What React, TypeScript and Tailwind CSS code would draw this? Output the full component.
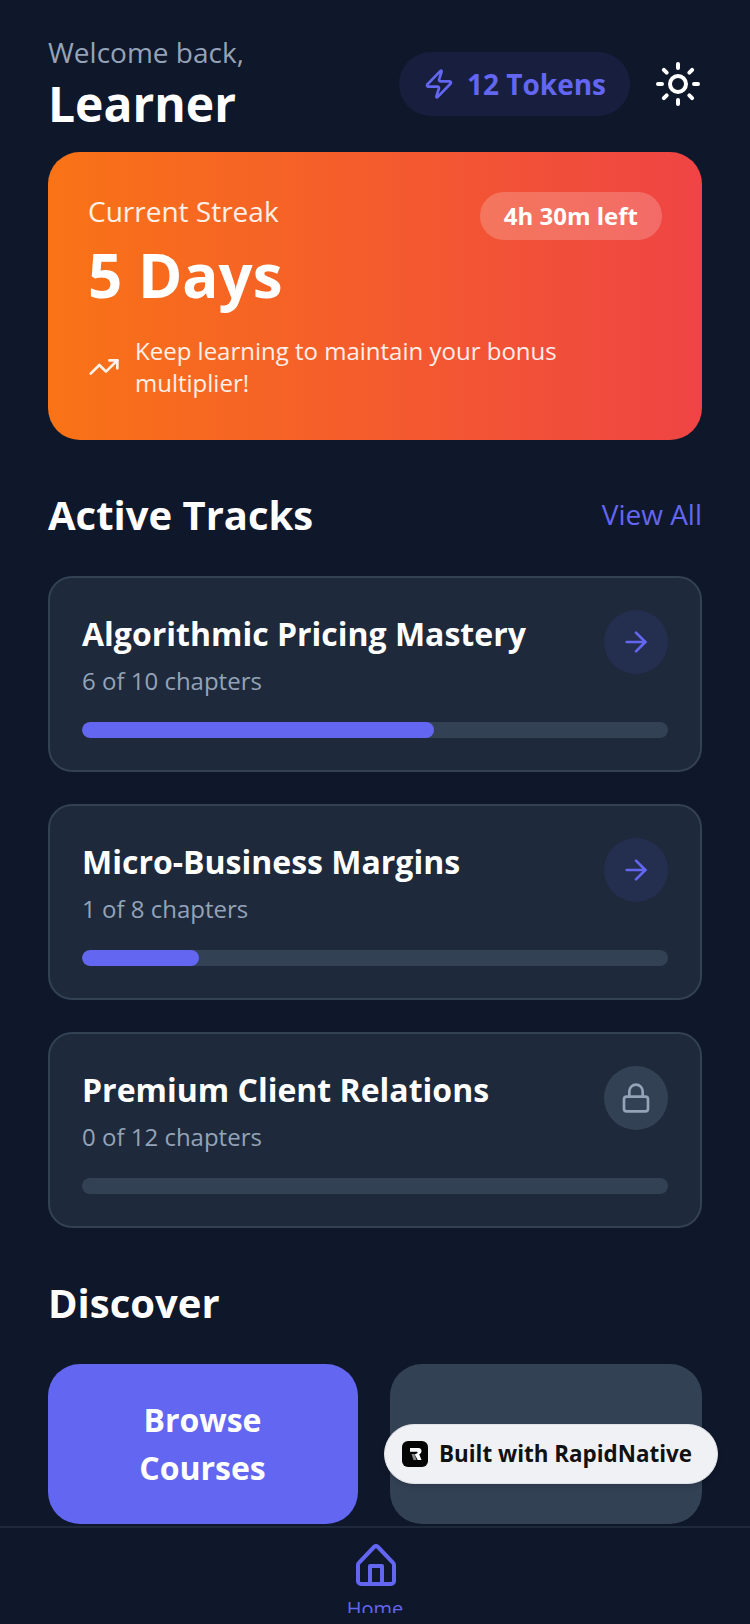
import { ArrowRight, Lock, Sun, TrendingUp, Zap } from "lucide-react"

const tracks = [
  { title: "Algorithmic Pricing Mastery", sub: "6 of 10 chapters", pct: 60, locked: false },
  { title: "Micro-Business Margins", sub: "1 of 8 chapters", pct: 20, locked: false },
  { title: "Premium Client Relations", sub: "0 of 12 chapters", pct: 0, locked: true },
]

function TrackCard({ title, sub, pct, locked }: (typeof tracks)[number]) {
  return (
    <div className="h-[196px] rounded-[24px] border-2 border-[#334155] bg-[#1e293b] px-[32px] pt-[32px]">
      <div className="flex items-start justify-between">
        <div>
          <h3 className="text-[32px] leading-[48px] font-bold text-white">{title}</h3>
          <p className="mt-[5px] text-[24px] leading-[36px] text-[#94a3b8]">{sub}</p>
        </div>
        <div className={`flex h-[64px] w-[64px] items-center justify-center rounded-full ${locked ? "bg-[#334155]" : "bg-[#6366f1]/10"}`}>
          {locked ? (
            <Lock className="h-[32px] w-[32px] text-[#94a3b8]" strokeWidth={2} />
          ) : (
            <ArrowRight className="h-[32px] w-[32px] text-[#6366f1]" strokeWidth={2} />
          )}
        </div>
      </div>
      <div className="mt-[23px] h-[16px] overflow-hidden rounded-full bg-[#334155]">
        <div className="h-full rounded-full bg-[#6366f1]" style={{ width: `${pct}%` }} />
      </div>
    </div>
  )
}

export default function App() {
  return (
    <div className="relative flex h-[1624px] w-[750px] flex-col overflow-hidden bg-[#0f172a] font-['Open_Sans',sans-serif]">
      <main className="h-[1526px] shrink-0 overflow-hidden px-[48px]">
        <header className="flex h-[152px] items-start justify-between pt-[34px]">
          <div>
            <p className="text-[28px] leading-[36px] text-[#94a3b8]">Welcome back,</p>
            <h1 className="text-[48px] leading-[68px] font-bold text-white">Learner</h1>
          </div>
          <div className="mt-[18px] flex items-center gap-[24px]">
            <div className="flex h-[64px] items-center gap-[12px] rounded-full bg-[#6366f1]/10 px-[24px]">
              <Zap className="h-[32px] w-[32px] text-[#6366f1]" strokeWidth={2} />
              <span className="text-[28px] font-bold text-[#6366f1]">12 Tokens</span>
            </div>
            <Sun className="h-[48px] w-[48px] text-white" strokeWidth={2} />
          </div>
        </header>

        <section className="h-[288px] rounded-[32px] bg-linear-to-r/srgb from-[#f97316] to-[#ef4444] px-[40px] pt-[40px]">
          <div className="flex items-start justify-between">
            <div>
              <p className="text-[28px] leading-[38px] text-white/90">Current Streak</p>
              <p className="mt-[5px] text-[60px] leading-[80px] font-bold text-white">5 Days</p>
            </div>
            <div className="flex h-[48px] items-center rounded-full bg-white/20 px-[24px] text-[24px] font-bold text-white">4h 30m left</div>
          </div>
          <div className="mt-[20px] flex items-center gap-[15px]">
            <TrendingUp className="h-[32px] w-[32px] shrink-0 text-white/90" strokeWidth={2} />
            <p className="w-[480px] text-[24px] leading-[32px] text-white/90">Keep learning to maintain your bonus multiplier!</p>
          </div>
        </section>

        <div className="mt-[47px] flex items-center justify-between">
          <h2 className="text-[40px] leading-[56px] font-bold text-white">Active Tracks</h2>
          <span className="pb-[2px] text-[28px] text-[#6366f1]">View All</span>
        </div>

        <div className="mt-[33px] flex flex-col gap-[32px]">
          {tracks.map((t) => (
            <TrackCard key={t.title} {...t} />
          ))}
        </div>

        <h2 className="mt-[47px] text-[40px] leading-[56px] font-bold text-white">Discover</h2>
        <div className="mt-[33px] flex gap-[32px]">
          <div className="flex h-[160px] w-[310px] items-center justify-center rounded-[32px] bg-[#6366f1] pr-[1px] text-center text-[32px] leading-[48px] font-bold text-white">
            Browse
            <br />
            Courses
          </div>
          <div className="h-[160px] flex-1 rounded-[32px] bg-[#334155]" />
        </div>
      </main>

      <nav className="flex h-[87px] shrink-0 flex-col items-center overflow-hidden border-t-2 border-[#1e293b] pt-[13px]">
        <svg viewBox="0 0 48 48" fill="none" stroke="#6366f1" strokeWidth="4" strokeLinecap="round" strokeLinejoin="round" className="ml-[2px] h-[48px] w-[48px] shrink-0">
          <path d="M6 24a3 3 0 0 1 .9-2.1L22 6a3 3 0 0 1 4 0l15.100 15.900a3 3 0 0 1 .9 2.100V40a3 3 0 0 1-3 3H9a3 3 0 0 1-3-3Z" />
          <path d="M18 43V25h12v18" />
        </svg>
        <span className="mt-[6px] shrink-0 text-[20px] leading-[28px] text-[#6366f1]">Home</span>
      </nav>

      <div className="absolute left-[384px] top-[1424px] flex h-[60px] w-[334px] items-center gap-[11px] rounded-full border border-[#dfe2e8] bg-[#f0f1f4] pl-[17px] shadow-md">
        <svg viewBox="0 0 26 26" className="h-[26px] w-[26px] shrink-0">
          <rect width="26" height="26" rx="6" fill="#050505" />
          <path d="M8 7h8.500c2.200 0 3 1.500 3 3 0 1.700-.9 2.800-2.300 3.300L19.500 19h-3.800l-3-5.500 2.500-1.300c.6-.3.5-1.400-.2-1.400H8Z" fill="#fff" />
          <path d="M9.500 13h3l2 6h-3Z" fill="#8a8a8a" />
        </svg>
        <span className="text-[22.400px] font-bold whitespace-nowrap text-[#111]">Built with RapidNative</span>
      </div>
    </div>
  )
}
